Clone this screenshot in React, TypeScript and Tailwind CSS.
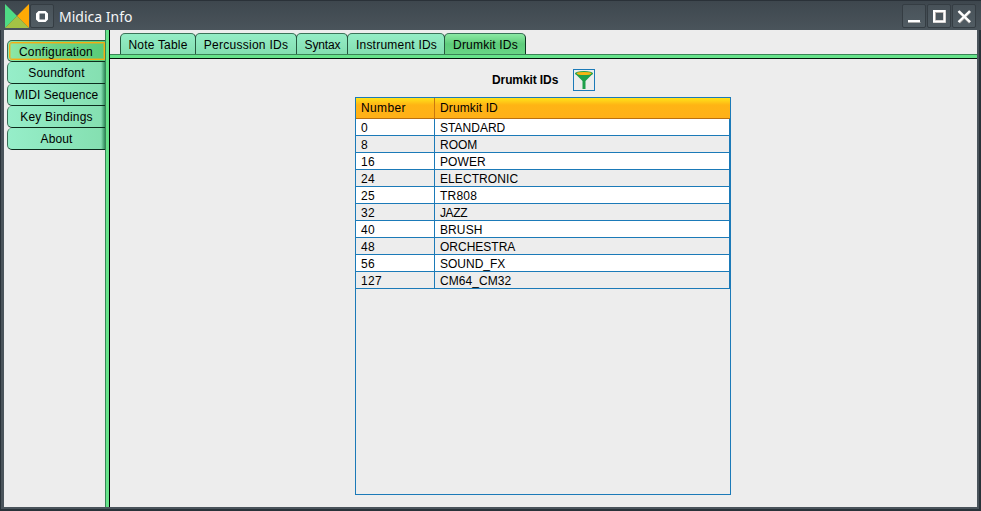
import React from "react";

const sideTabs = [
  { label: "Configuration", spacing: "tracking-[0.2px]" },
  { label: "Soundfont", spacing: "tracking-[0.2px]" },
  { label: "MIDI Sequence", spacing: "tracking-[0.05px]" },
  { label: "Key Bindings", spacing: "tracking-[0.2px]" },
  { label: "About", spacing: "tracking-[0.1px]" },
];

const topTabs = [
  { label: "Note Table", width: "w-[76px]", spacing: "tracking-[0.2px]" },
  { label: "Percussion IDs", width: "w-[102px]", spacing: "tracking-[0.27px]" },
  { label: "Syntax", width: "w-[52px]", spacing: "pl-px tracking-[-0.15px]" },
  { label: "Instrument IDs", width: "w-[98px]", spacing: "pl-px tracking-[0.22px]" },
  { label: "Drumkit IDs", width: "w-[82px]", spacing: "pl-px tracking-[0.2px]" },
];

const drumkits: [string, string, string][] = [
  ["0", "STANDARD", "tracking-[0.02px]"],
  ["8", "ROOM", "tracking-[0px]"],
  ["16", "POWER", "tracking-[0.1px]"],
  ["24", "ELECTRONIC", "tracking-[0.08px]"],
  ["25", "TR808", "tracking-[0.2px]"],
  ["32", "JAZZ", "tracking-[-0.4px]"],
  ["40", "BRUSH", "tracking-[0.1px]"],
  ["48", "ORCHESTRA", "tracking-[0px]"],
  ["56", "SOUND_FX", "tracking-[0px]"],
  ["127", "CM64_CM32", "tracking-[0.05px]"],
];

function WindowButton({ children }: { children: React.ReactNode }) {
  return (
    <button className="h-[24px] w-[24px] shrink-0 rounded-[2px] border border-[#353d43] bg-linear-to-b from-[#485259] to-[#515c63]">
      <svg width="22" height="22" viewBox="0 0 22 22" fill="none">
        {children}
      </svg>
    </button>
  );
}

function TitleBar() {
  return (
    <header className="flex h-[30px] shrink-0 items-start border-t border-[#2a3138] bg-linear-to-b from-[#3e474e] to-[#4a545b] pt-[3px] pr-[5px] pl-[5px]">
      <svg width="24" height="24" viewBox="0 0 24 24" className="shrink-0">
        <path d="M0 0L12 12L0 24Z" fill="#4fdc85" />
        <path d="M24 0L12 12L24 24Z" fill="#ffaa05" />
        <path d="M0 24L12 12L24 24Z" fill="#a4c345" />
      </svg>
      <div className="ml-[1px] flex">
        <WindowButton>
          <path
            d="M7.5 6H14.5L17 8.5V14.5L14.5 17H7.5L5 14.5V8.5Z M8.5 8.5V14.5H14V8.5Z"
            fill="#fff"
            fillRule="evenodd"
          />
        </WindowButton>
      </div>
      <h1 className="ml-[5px] grow font-['Noto_Sans',sans-serif] text-[14px] leading-[25px] text-[#f5f7f8]">
        Midica Info
      </h1>
      <div className="flex gap-[1px]">
        <WindowButton>
          <path d="M5 17.5h12.5" stroke="#aaa" strokeWidth="1" />
          <path d="M5 16h12" stroke="#fff" strokeWidth="2" />
        </WindowButton>
        <WindowButton>
          <path d="M6.5 6.5h10v10h-10z" stroke="#b5afac" strokeWidth="3" />
          <path d="M6 6h10.5v10.5h-10.5z" stroke="#fff" strokeWidth="2" />
        </WindowButton>
        <WindowButton>
          <path d="M6 6.5l11 11M17 6.5l-11 11" stroke="#a8a5a3" strokeWidth="3" />
          <path d="M5.5 6l11.5 11M17 6l-11.5 11" stroke="#fff" strokeWidth="2.4" />
        </WindowButton>
      </div>
    </header>
  );
}

function SideNav() {
  return (
    <nav className="flex w-[101px] shrink-0 flex-col pt-[10px] pl-[3px]">
      {sideTabs.map((t, i) => (
        <div
          key={t.label}
          className={
            "flex h-[22px] rounded-l-[5px] border border-r-0 border-t-[#2c5f49] border-b-[#0c2d1d] border-l-[#386b55] " +
            (i === 0
              ? "bg-linear-to-r from-[#8ee8a8] via-[#6cd386] to-[#5acb78] py-[1px] pl-[1px]"
              : "border-t-0 bg-linear-to-r from-[#96eec9] to-[#84dfb0]")
          }
        >
          <span
            className={
              "flex grow items-center justify-center " +
              t.spacing +
              (i === 0
                ? " rounded-l-[3px] border border-[#f6ad12] pt-[2px] pr-[2px] leading-[14px] shadow-[inset_0_0_0_1px_#f6ad1270]"
                : " bg-linear-to-l from-[#2f8c5c] to-transparent bg-[length:4px_100%] bg-right bg-no-repeat pt-[1px] leading-[20px]")
            }
          >
            {t.label}
          </span>
        </div>
      ))}
    </nav>
  );
}

function TopTabs() {
  return (
    <nav className="flex h-[24px] items-end pl-[10px]">
      {topTabs.map((t, i) => (
        <div
          key={t.label}
          className={
            "relative -mr-px h-[21px] rounded-t-[5px] border border-b-0 border-t-[#3b7359] border-r-[#0d3421] border-l-[#275940] text-center leading-[22px] last:mr-0 " +
            t.width +
            " " +
            t.spacing +
            (i === 4
              ? " bg-linear-to-b from-[#8be9a3] via-[#5ecc7b] to-[#68d485]"
              : " bg-linear-to-b from-[#94edc6] to-[#84dfb1]")
          }
        >
          {t.label}
        </div>
      ))}
    </nav>
  );
}

function FilterIcon() {
  return (
    <svg width="20" height="20" viewBox="0 0 20 20">
      <path d="M1 3.5L8.5 11V19H11.5V11L19 3.5Z" fill="#1fa04b" />
      <ellipse cx="10" cy="3.5" rx="9" ry="2.5" fill="#1fa04b" />
      <ellipse cx="10" cy="3.5" rx="7.5" ry="1.6" fill="#f8b414" />
    </svg>
  );
}

function DrumkitTable() {
  return (
    <div className="h-[398px] w-[376px] border border-[#1b7ab8]">
      <div className="flex h-[21px] border-b border-[#b96f10] bg-linear-to-b from-[#fee31a] via-[#ffb414] via-35% to-[#ffb018] leading-[20px]">
        <div className="w-[79px] border-r border-[#c8780f] pl-[5px] tracking-[0.35px]">Number</div>
        <div className="pl-[5px] tracking-[0.12px]">Drumkit ID</div>
      </div>
      {drumkits.map(([num, name, spacing], i) => (
        <div
          key={num}
          className={
            "flex h-[17px] border-r border-b border-[#1b7ab8] leading-[18px] " +
            (i % 2 === 0 ? "bg-white" : "bg-[#ededed]")
          }
        >
          <div className="w-[79px] border-r border-[#1b7ab8] pl-[5px] tracking-[0.33px]">{num}</div>
          <div className={"pl-[5px] " + spacing}>{name}</div>
        </div>
      ))}
    </div>
  );
}

export default function App() {
  return (
    <div className="flex h-[511px] w-[981px] flex-col overflow-hidden bg-[#293239] font-['Liberation_Sans',Arial,sans-serif] text-[12px] text-black">
      <TitleBar />
      <div className="flex h-[479px] pr-[2px] pl-px">
        <div className="flex grow border-r-2 border-b-2 border-l-[3px] border-[#4a545b] bg-[#ededed]">
          <SideNav />
          <div className="w-[5px] shrink-0 border-r border-l border-r-black border-l-[#388456] bg-[#66e38a]" />
          <main className="grow">
            <TopTabs />
            <div className="h-[5px] border-t border-b border-t-[#388456] border-b-[#00150a] bg-[#66e38a]" />
            <div className="flex flex-col pl-[245px]">
              <div className="flex h-[38px] items-center pt-[4px] pl-[137px]">
                <h2 className="w-[81px] font-bold tracking-[-0.1px]">Drumkit IDs</h2>
                <div className="border border-[#1b7ab8]">
                  <FilterIcon />
                </div>
              </div>
              <DrumkitTable />
            </div>
          </main>
        </div>
      </div>
    </div>
  );
}
